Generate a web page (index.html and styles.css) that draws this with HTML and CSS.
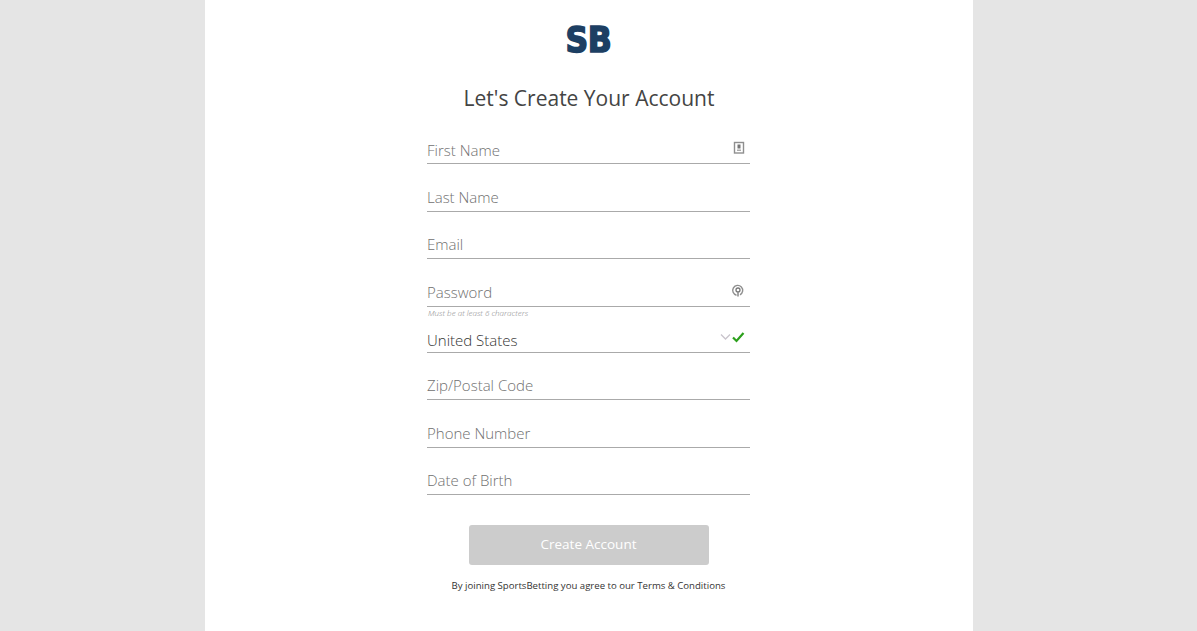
FILE: index.html
```html
<!DOCTYPE html>
<html lang="en">
<head>
  <meta charset="UTF-8">
  <meta name="viewport" content="width=device-width, initial-scale=1.0">
  <title>Create Account</title>
  <link rel="stylesheet" href="styles.css">
</head>
<body>

  <div class="panel">
    <div class="logo">SB</div>
    <h1>Let's Create Your Account</h1>

    <form class="signup">
      <div class="field">
        <span class="label">First Name</span>
        <svg class="icon icon-card" width="12" height="14" viewBox="0 0 12 14"><rect x="1.5" y="1.5" width="9" height="10.5" fill="none" stroke="#8f8f8f" stroke-width="1.4"/><rect x="4.5" y="3.5" width="3" height="4" fill="#777"/><rect x="4" y="8.5" width="4" height="1.5" fill="#aaa"/></svg>
      </div>
      <div class="field"><span class="label">Last Name</span></div>
      <div class="field"><span class="label">Email</span></div>
      <div class="field">
        <span class="label">Password</span>
        <svg class="icon icon-lock" width="14" height="16" viewBox="0 0 14 16"><path d="M5.5 12.2A5 5 0 1 1 9 11.8" fill="none" stroke="#8f8f8f" stroke-width="1.4"/><circle cx="7" cy="7" r="2" fill="none" stroke="#777" stroke-width="1.3"/><rect x="6.2" y="8.5" width="1.6" height="5" fill="#8f8f8f"/></svg>
      </div>
      <p class="hint">Must be at least 6 characters</p>
      <div class="field select">
        <span class="label filled">United States</span>
        <svg class="icon icon-check" width="26" height="12" viewBox="0 0 26 12"><path d="M1 3.5l4.5 4.5 4.5-4.5" fill="none" stroke="#c9c4cc" stroke-width="1.3"/><path d="M13 6.5l3.5 3.5 7-8" fill="none" stroke="#2ca01c" stroke-width="2.2"/></svg>
      </div>
      <div class="field"><span class="label">Zip/Postal Code</span></div>
      <div class="field"><span class="label">Phone Number</span></div>
      <div class="field"><span class="label">Date of Birth</span></div>

      <div class="submit">Create Account</div>
      <p class="terms">By joining SportsBetting you agree to our Terms &amp; Conditions</p>
    </form>
  </div>

</body>
</html>
```

FILE: styles.css
```css
html, body {
  height: 100%;
}

body {
  margin: 0;
  background-color: #e5e5e5;
  font-family: "Open Sans", Arial, sans-serif;
  overflow: hidden;
}

.panel {
  width: 768px;
  height: 631px;
  margin-left: 205px;
  background-color: #fff;
  padding-top: 27px;
  box-sizing: border-box;
  display: flex;
  flex-direction: column;
  align-items: center;
}

/* Logo */
.logo {
  height: 26px;
  margin-right: 2px;
  line-height: 26px;
  font-family: "DejaVu Sans", sans-serif;
  font-weight: 700;
  font-size: 35px;
  letter-spacing: -0.5px;
  color: #1d3f63;
  -webkit-text-stroke: 1.6px #1d3f63;
  transform: scaleX(0.9);
}

h1 {
  margin: 29px 0 0;
  font-size: 21px;
  font-weight: 400;
  line-height: 32px;
  color: #444;
}

/* Form */
.signup {
  width: 323px;
  margin: 18px 1px 0 0;
}

.field {
  height: 47.5px;
  box-sizing: border-box;
  border-bottom: 1px solid #aaa;
  display: flex;
  align-items: flex-end;
  justify-content: space-between;
  padding: 0 4px 2px 0;
}

.field:first-child {
  height: 32px;
  padding-bottom: 1px;
}

.label {
  font-size: 15px;
  font-weight: 300;
  line-height: 24px;
  color: #707070;
}

.label.filled {
  color: #333;
}

.icon-card {
  margin: 0 1px 7px 0;
}

.icon-lock {
  margin: 0 1px 5px 0;
}

.icon-check {
  margin-bottom: 9px;
}

.hint {
  margin: 1px 0 0;
  padding-left: 1px;
  height: 10px;
  font-size: 8px;
  line-height: 9px;
  font-style: italic;
  font-weight: 300;
  color: #888;
}

.field.select {
  height: 35px;
  padding-bottom: 0;
}

.submit {
  width: 240px;
  height: 40px;
  margin: 30px auto 0;
  border-radius: 3px;
  background-color: #ccc;
  color: #fff;
  font-size: 13.5px;
  line-height: 39px;
  text-align: center;
}

.terms {
  margin: 14px 0 0;
  font-size: 9.6px;
  line-height: 13px;
  text-align: center;
  color: #333;
}
```
